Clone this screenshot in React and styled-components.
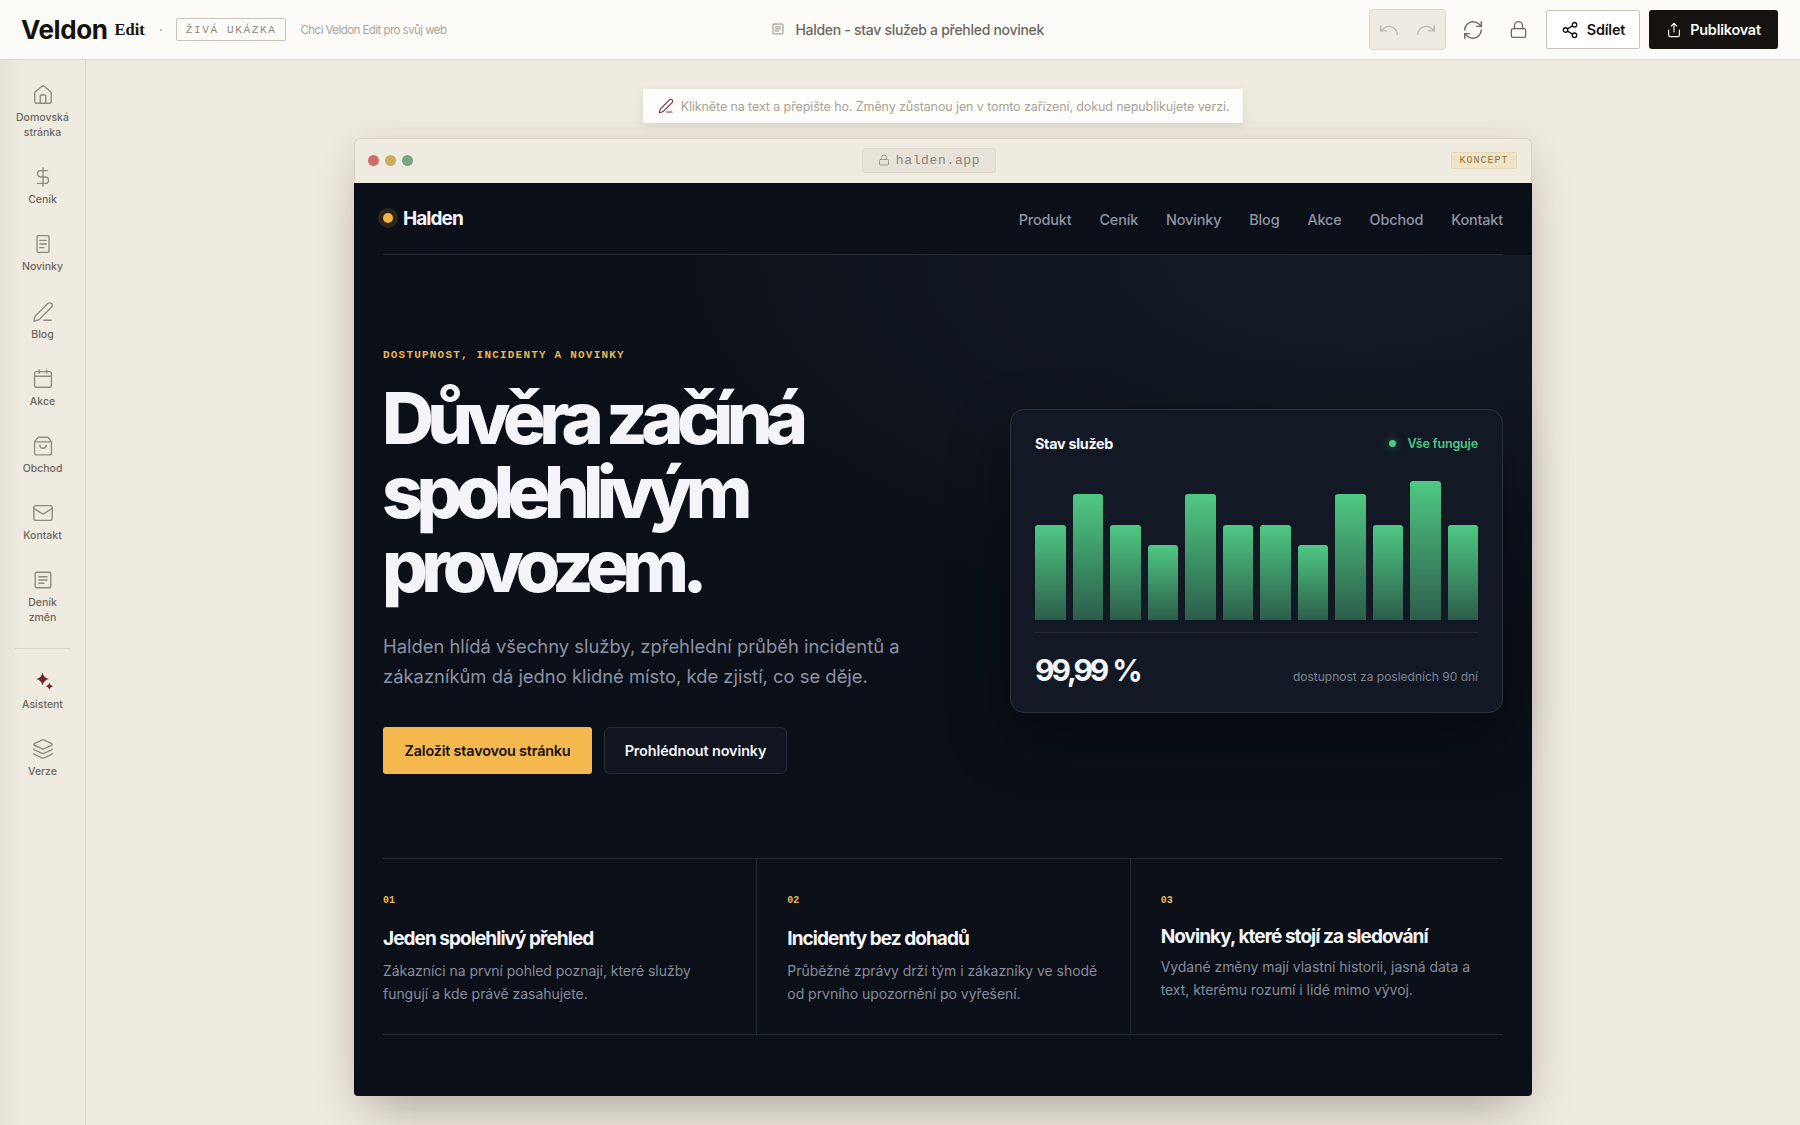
import React from "react";
import styled, { createGlobalStyle } from "styled-components";
import {
  House,
  DollarSign,
  PenLine,
  Mail,
  Layers,
  Undo,
  Redo,
  RefreshCw,
  Lock,
  Share2,
  Share,
} from "lucide-react";

const GlobalStyle = createGlobalStyle`
  * {
    box-sizing: border-box;
  }
  html, body {
    margin: 0;
    padding: 0;
    height: 100%;
  }
  body {
    font-family: Inter, "Liberation Sans", sans-serif;
    background: #f0ebe1;
    overflow: hidden;
  }
`;

const mono = `"Liberation Mono", monospace`;

const Page = styled.div`
  width: 1800px;
  height: 1125px;
  display: flex;
  flex-direction: column;
  overflow: hidden;
`;

const TopBar = styled.header`
  height: 60px;
  flex: none;
  display: flex;
  justify-content: space-between;
  align-items: center;
  padding: 0 22px 0 21px;
  background: #fcfbf7;
  border-bottom: 1px solid #d9d5cb;
`;

const Brand = styled.div`
  display: flex;
  align-items: center;
`;

const BrandName = styled.span`
  font-size: 26px;
  font-weight: 700;
  letter-spacing: -0.4px;
  color: #15120f;
`;

const BrandEdit = styled.span`
  font-family: "Liberation Serif", serif;
  font-size: 16.5px;
  font-weight: 700;
  color: #15120f;
  margin-left: 7px;
`;

const BrandDot = styled.span`
  width: 2px;
  height: 2px;
  border-radius: 50%;
  background: #a9a59b;
  margin: 0 14px 0 15px;
`;

const LiveTag = styled.span`
  font-family: ${mono};
  font-size: 11px;
  letter-spacing: 1.65px;
  color: #8d887d;
  height: 23px;
  padding: 0 8px 0 9px;
  display: flex;
  align-items: center;
  border: 1px solid #c9c4b8;
  border-radius: 2px;
`;

const TopLink = styled.span`
  font-size: 11.5px;
  letter-spacing: -0.55px;
  color: #a9a59b;
  margin-left: 15px;
`;

const DocTitle = styled.div`
  display: flex;
  align-items: center;
  gap: 10px;
  margin-top: -1px;
  font-size: 14px;
  font-weight: 500;
  letter-spacing: -0.29px;
  color: #6b675e;
  svg {
    color: #8f8b80;
  }
`;

const Actions = styled.div`
  display: flex;
  align-items: center;
  justify-content: flex-end;
`;

const HistoryGroup = styled.div`
  width: 77px;
  height: 41px;
  margin-right: 4px;
  display: flex;
  align-items: center;
  justify-content: space-between;
  padding: 0 8px;
  background: #efebe3;
  border: 1px solid #ddd8cd;
  border-radius: 4px;
  color: #bdb8ac;
`;

const ToolIcon = styled.span`
  width: 46px;
  display: flex;
  justify-content: center;
  color: #6b675e;
`;

const ShareButton = styled.button`
  height: 39px;
  width: 94px;
  margin-left: 4px;
  display: flex;
  align-items: center;
  justify-content: center;
  gap: 8px;
  font: 600 14.4px Inter, sans-serif;
  letter-spacing: -0.2px;
  color: #15120f;
  background: #fff;
  border: 1px solid #c9c4b8;
  border-radius: 2px;
`;

const PublishButton = styled(ShareButton)`
  width: 129px;
  margin-left: 9px;
  color: #fcfbf7;
  background: #15120f;
  border: 0;
  border-radius: 3px;
`;

const Body = styled.div`
  flex: 1;
  min-height: 0;
  display: flex;
`;

const SideBar = styled.nav`
  width: 86px;
  flex: none;
  padding: 11px 0;
  display: flex;
  flex-direction: column;
  align-items: center;
  background: linear-gradient(90deg, #e6e1d7 0, #efeae0 18px, #f0ebe1 30px);
  border-right: 1px solid #d6d1c6;
`;

const SideItem = styled.div`
  width: 100%;
  padding: 13.1px 0;
  display: flex;
  flex-direction: column;
  align-items: center;
  gap: 4px;
  color: #8f8b80;
  svg {
    display: block;
  }
`;

const SideLabel = styled.span`
  font-size: 10.5px;
  line-height: 15px;
  font-weight: 500;
  color: #6b675e;
  text-align: center;
`;

const SideRule = styled.div`
  width: 56px;
  height: 1px;
  flex: none;
  margin: 9px 0;
  background: #d9d4c9;
`;

const Canvas = styled.main`
  flex: 1;
  min-width: 0;
  padding-top: 29px;
  display: flex;
  flex-direction: column;
  align-items: center;
  overflow: hidden;
`;

const Notice = styled.div`
  height: 34px;
  flex: none;
  display: flex;
  align-items: center;
  gap: 7px;
  padding: 0 14px 0 15px;
  font-size: 12.5px;
  letter-spacing: -0.1px;
  color: #a8a398;
  background: #fffefb;
  border-radius: 2px;
  box-shadow: 0 2px 8px rgba(60, 50, 30, 0.12);
  svg {
    color: #7a2a3a;
  }
`;

const Frame = styled.section`
  width: 1178px;
  flex: none;
  margin-top: 15px;
  border-radius: 6px 6px 4px 4px;
  box-shadow: 0 26px 50px -14px rgba(40, 32, 15, 0.3), 0 0 36px rgba(40, 32, 15, 0.07);
`;

const FrameBar = styled.div`
  height: 45px;
  display: flex;
  align-items: center;
  justify-content: space-between;
  padding: 0 14px 2px 13px;
  background: #f0ebe1;
  border: 1px solid #d8d2c5;
  border-bottom: 0;
  border-radius: 6px 6px 0 0;
`;

const Dots = styled.div`
  display: flex;
  gap: 6px;
`;

const Dot = styled.span`
  width: 11px;
  height: 11px;
  border-radius: 50%;
  background: ${(p) => p.$color};
`;

const UrlPill = styled.div`
  width: 134px;
  height: 25px;
  margin-right: 6px;
  display: flex;
  align-items: center;
  justify-content: center;
  gap: 6px;
  font-family: ${mono};
  font-size: 13px;
  letter-spacing: 0.65px;
  color: #8a857a;
  background: #e8e3d8;
  border: 1px solid #dfd9cc;
  border-radius: 3px;
`;

const DraftBadge = styled.span`
  width: 66px;
  height: 17px;
  display: flex;
  align-items: center;
  justify-content: center;
  font-family: ${mono};
  font-size: 10px;
  letter-spacing: 1px;
  color: #8f7434;
  background: #efe3c8;
  border: 1px solid #e5d8b8;
  border-radius: 2px;
`;

const Site = styled.div`
  background: #0b0f17;
  border-radius: 0 0 4px 4px;
  padding-bottom: 61px;
`;

const Wrap = styled.div`
  width: 1120px;
  margin: 0 auto;
`;

const SiteNav = styled(Wrap)`
  height: 72px;
  display: flex;
  align-items: center;
  justify-content: space-between;
  padding-bottom: 1px;
  border-bottom: 1px solid #222a36;
`;

const Logo = styled.div`
  display: flex;
  align-items: center;
  gap: 5px;
  margin-left: -5px;
  font-size: 19px;
  font-weight: 700;
  letter-spacing: -0.95px;
  color: #f3f5fa;
`;

const LogoMark = styled.span`
  width: 10px;
  height: 10px;
  margin: 5px;
  border-radius: 50%;
  background: #f6b545;
  box-shadow: 0 0 0 5px rgba(246, 181, 69, 0.14);
`;

const NavLinks = styled.div`
  display: flex;
  gap: 28px;
  margin-top: 2px;
`;

const NavLink = styled.a`
  font-size: 14.4px;
  font-weight: 500;
  letter-spacing: -0.14px;
  color: #8f96a5;
`;

const HeroBand = styled.div`
  background: radial-gradient(780px 380px at 85% 0, #141b27 0, rgba(20, 27, 39, 0.55) 50%, rgba(11, 15, 23, 0) 100%);
`;

const Hero = styled(Wrap)`
  height: 603px;
  padding: 93px 0 84px;
  display: grid;
  grid-template-columns: 1fr 493px;
  align-items: center;
`;

const HeroCopy = styled.div`
  display: flex;
  flex-direction: column;
  align-items: flex-start;
`;

const Eyebrow = styled.div`
  font-family: ${mono};
  font-size: 11px;
  line-height: 13px;
  font-weight: 700;
  letter-spacing: 1.2px;
  color: #e9b656;
`;

const Headline = styled.h1`
  margin: 19px 0 0 -1px;
  font-size: 72px;
  line-height: 74px;
  font-weight: 800;
  letter-spacing: -6.7px;
  color: #f3f5fb;
`;

const Lead = styled.p`
  margin: 28px 0 0;
  font-size: 18.4px;
  line-height: 30px;
  color: #8b93a3;
`;

const ButtonRow = styled.div`
  display: flex;
  gap: 12px;
  margin-top: 36px;
`;

const PrimaryCta = styled.a`
  width: 209px;
  height: 47px;
  display: flex;
  align-items: center;
  justify-content: center;
  font-size: 14.4px;
  font-weight: 600;
  letter-spacing: -0.18px;
  color: #15120f;
  background: #f4b84e;
  border-radius: 3px;
`;

const GhostCta = styled.a`
  width: 183px;
  height: 47px;
  display: flex;
  align-items: center;
  justify-content: center;
  font-size: 14.4px;
  font-weight: 600;
  letter-spacing: -0.1px;
  color: #f3f5fb;
  background: #10151f;
  border: 1px solid #252c39;
  border-radius: 6px;
`;

const StatusCard = styled.div`
  height: 304px;
  padding: 23px 24px 0;
  background: #121924;
  border: 1px solid #2a313d;
  border-radius: 14px;
  box-shadow: 0 24px 60px rgba(0, 0, 0, 0.35);
`;

const CardHead = styled.div`
  display: flex;
  align-items: center;
  justify-content: space-between;
  height: 20px;
`;

const CardTitle = styled.span`
  font-size: 14.4px;
  font-weight: 700;
  letter-spacing: -0.3px;
  color: #f3f5fb;
`;

const CardState = styled.span`
  display: flex;
  align-items: center;
  gap: 11px;
  font-size: 12.5px;
  font-weight: 600;
  letter-spacing: -0.15px;
  color: #4fc983;
  &::before {
    content: "";
    width: 7px;
    height: 7px;
    border-radius: 50%;
    background: #4fc983;
    box-shadow: 0 0 8px rgba(79, 201, 131, 0.6);
  }
`;

const Bars = styled.div`
  height: 139px;
  margin-top: 28px;
  display: grid;
  grid-template-columns: repeat(12, 1fr);
  gap: 7px;
  align-items: end;
`;

const Bar = styled.div`
  height: ${(p) => p.$h}px;
  border-radius: 3px 3px 0 0;
  background: linear-gradient(180deg, #4fc983 0, #2c5e4a 100%);
`;

const CardFoot = styled.div`
  margin-top: 12px;
  padding-top: 18px;
  display: flex;
  align-items: flex-end;
  justify-content: space-between;
  border-top: 1px solid #252c38;
`;

const BigNumber = styled.span`
  font-size: 30px;
  line-height: 38px;
  font-weight: 700;
  letter-spacing: -3.1px;
  word-spacing: 2px;
  color: #f3f5fb;
`;

const FootNote = styled.span`
  font-size: 12px;
  line-height: 25px;
  color: #7b8494;
`;

const Features = styled(Wrap)`
  display: grid;
  grid-template-columns: repeat(3, 1fr);
  border-top: 1px solid #222a36;
  border-bottom: 1px solid #222a36;
`;

const Feature = styled.article`
  height: 175px;
  padding: 36px 20px 0 ${(p) => (p.$first ? "0" : "30px")};
  border-left: ${(p) => (p.$first ? "0" : "1px solid #222a36")};
`;

const FeatureNumber = styled.div`
  font-family: ${mono};
  font-size: 10px;
  line-height: 12px;
  font-weight: 700;
  color: #e9b656;
`;

const FeatureTitle = styled.h3`
  margin: ${(p) => (p.$raised ? "18px" : "20px")} 0 0;
  font-size: 19px;
  line-height: 23px;
  font-weight: 700;
  letter-spacing: -0.95px;
  color: #f3f5fb;
`;

const FeatureText = styled.p`
  margin: ${(p) => (p.$raised ? "7px" : "8.5px")} 0 0;
  font-size: 14px;
  line-height: 23px;
  letter-spacing: -0.04px;
  color: #858d9c;
`;

const NewsIcon = (props) => (
  <svg width="22" height="22" viewBox="0 0 24 24" fill="none" stroke="currentColor" strokeWidth="1.5" strokeLinecap="round" {...props}>
    <rect x="5.5" y="2.8" width="13" height="18.4" rx="1.2" />
    <path d="M8.5 8h7M8.5 12h7M8.5 16h4.5" />
  </svg>
);

const CalendarIcon = (props) => (
  <svg width="22" height="22" viewBox="0 0 24 24" fill="none" stroke="currentColor" strokeWidth="1.5" strokeLinecap="round" {...props}>
    <rect x="2.8" y="4" width="18.4" height="17" rx="2" />
    <path d="M3 9h18M8 2.2v3.4M16 2.2v3.4" />
  </svg>
);

const BagIcon = (props) => (
  <svg width="22" height="22" viewBox="0 0 24 24" fill="none" stroke="currentColor" strokeWidth="1.5" strokeLinecap="round" strokeLinejoin="round" {...props}>
    <path d="M6.5 2.5h11l3.7 5V20a1.7 1.7 0 0 1-1.7 1.7h-15A1.7 1.7 0 0 1 2.8 20V7.5z" />
    <path d="M3 7.5h18M8.5 11a3.5 3.5 0 0 0 7 0" />
  </svg>
);

const LogIcon = ({ size = 22, ...props }) => (
  <svg width={size} height={size} viewBox="0 0 24 24" fill="none" stroke="currentColor" strokeWidth={size < 20 ? 1.7 : 1.5} strokeLinecap="round" {...props}>
    <rect x="3.5" y="3.5" width="17" height="17" rx="1.5" />
    <path d="M7.5 8.5h9M7.5 12h9M7.5 15.5h5.5" />
  </svg>
);

const SparkIcon = (props) => (
  <svg width="22" height="22" viewBox="0 0 24 24" fill="#6e2433" {...props}>
    <path d="M11.5 1.8Q12.8 7.5 18.5 8.8 12.8 10.1 11.5 15.8 10.2 10.1 4.5 8.8 10.2 7.5 11.5 1.8z" />
    <path d="M19 12.7Q19.7 15.8 22.8 16.5 19.7 17.2 19 20.3 18.3 17.2 15.2 16.5 18.3 15.8 19 12.7z" />
  </svg>
);

const sideItems = [
  { icon: <House size={22} strokeWidth={1.5} />, label: ["Domovská", "stránka"] },
  { icon: <DollarSign size={22} strokeWidth={1.5} />, label: ["Ceník"] },
  { icon: <NewsIcon />, label: ["Novinky"] },
  { icon: <PenLine size={22} strokeWidth={1.5} />, label: ["Blog"] },
  { icon: <CalendarIcon />, label: ["Akce"] },
  { icon: <BagIcon />, label: ["Obchod"] },
  { icon: <Mail size={22} strokeWidth={1.5} />, label: ["Kontakt"] },
  { icon: <LogIcon />, label: ["Deník", "změn"] },
];

const sideTools = [
  { icon: <SparkIcon />, label: ["Asistent"] },
  { icon: <Layers size={22} strokeWidth={1.5} />, label: ["Verze"] },
];

const renderSideItem = (item) => (
  <SideItem key={item.label[0]}>
    {item.icon}
    <SideLabel>
      {item.label.map((line) => (
        <div key={line}>{line}</div>
      ))}
    </SideLabel>
  </SideItem>
);

const navLinks = ["Produkt", "Ceník", "Novinky", "Blog", "Akce", "Obchod", "Kontakt"];
const barHeights = [95, 126, 95, 75, 126, 95, 95, 75, 126, 95, 139, 95];

const features = [
  {
    number: "01",
    title: "Jeden spolehlivý přehled",
    text: ["Zákazníci na první pohled poznají, které služby", "fungují a kde právě zasahujete."],
  },
  {
    number: "02",
    title: "Incidenty bez dohadů",
    text: ["Průběžné zprávy drží tým i zákazníky ve shodě", "od prvního upozornění po vyřešení."],
  },
  {
    number: "03",
    title: "Novinky, které stojí za sledování",
    text: ["Vydané změny mají vlastní historii, jasná data a", "text, kterému rozumí i lidé mimo vývoj."],
    raised: true,
  },
];

const App = () => (
  <Page>
    <GlobalStyle />
    <TopBar>
      <Brand>
        <BrandName>Veldon</BrandName>
        <BrandEdit>Edit</BrandEdit>
        <BrandDot />
        <LiveTag>ŽIVÁ UKÁZKA</LiveTag>
        <TopLink>Chci Veldon Edit pro svůj web</TopLink>
      </Brand>
      <DocTitle>
        <LogIcon size={14} />
        Halden - stav služeb a přehled novinek
      </DocTitle>
      <Actions>
        <HistoryGroup>
          <Undo size={22} strokeWidth={1.5} />
          <Redo size={22} strokeWidth={1.5} />
        </HistoryGroup>
        <ToolIcon>
          <RefreshCw size={22} strokeWidth={1.5} />
        </ToolIcon>
        <ToolIcon>
          <Lock size={19} strokeWidth={1.6} />
        </ToolIcon>
        <ShareButton>
          <Share2 size={18} strokeWidth={1.7} />
          Sdílet
        </ShareButton>
        <PublishButton>
          <Share size={16} strokeWidth={1.7} />
          Publikovat
        </PublishButton>
      </Actions>
    </TopBar>
    <Body>
      <SideBar>
        {sideItems.map(renderSideItem)}
        <SideRule />
        {sideTools.map(renderSideItem)}
      </SideBar>
      <Canvas>
        <Notice>
          <PenLine size={16} strokeWidth={1.6} />
          Klikněte na text a přepište ho. Změny zůstanou jen v tomto zařízení, dokud nepublikujete verzi.
        </Notice>
        <Frame>
          <FrameBar>
            <Dots>
              <Dot $color="#cb6f68" />
              <Dot $color="#cfaa5c" />
              <Dot $color="#7ba583" />
            </Dots>
            <UrlPill>
              <Lock size={12} strokeWidth={1.6} />
              halden.app
            </UrlPill>
            <DraftBadge>KONCEPT</DraftBadge>
          </FrameBar>
          <Site>
            <SiteNav>
              <Logo>
                <LogoMark />
                Halden
              </Logo>
              <NavLinks>
                {navLinks.map((link) => (
                  <NavLink key={link}>{link}</NavLink>
                ))}
              </NavLinks>
            </SiteNav>
            <HeroBand>
              <Hero>
                <HeroCopy>
                  <Eyebrow>DOSTUPNOST, INCIDENTY A NOVINKY</Eyebrow>
                  <Headline>
                    Důvěra začíná
                    <br />
                    spolehlivým
                    <br />
                    provozem.
                  </Headline>
                  <Lead>
                    Halden hlídá všechny služby, zpřehlední průběh incidentů a
                    <br />
                    zákazníkům dá jedno klidné místo, kde zjistí, co se děje.
                  </Lead>
                  <ButtonRow>
                    <PrimaryCta>Založit stavovou stránku</PrimaryCta>
                    <GhostCta>Prohlédnout novinky</GhostCta>
                  </ButtonRow>
                </HeroCopy>
                <StatusCard>
                  <CardHead>
                    <CardTitle>Stav služeb</CardTitle>
                    <CardState>Vše funguje</CardState>
                  </CardHead>
                  <Bars>
                    {barHeights.map((h, i) => (
                      <Bar key={i} $h={h} />
                    ))}
                  </Bars>
                  <CardFoot>
                    <BigNumber>99,99 %</BigNumber>
                    <FootNote>dostupnost za posledních 90 dní</FootNote>
                  </CardFoot>
                </StatusCard>
              </Hero>
            </HeroBand>
            <Features>
              {features.map((f, i) => (
                <Feature key={f.number} $first={i === 0}>
                  <FeatureNumber>{f.number}</FeatureNumber>
                  <FeatureTitle $raised={f.raised}>{f.title}</FeatureTitle>
                  <FeatureText $raised={f.raised}>
                    {f.text[0]}
                    <br />
                    {f.text[1]}
                  </FeatureText>
                </Feature>
              ))}
            </Features>
          </Site>
        </Frame>
      </Canvas>
    </Body>
  </Page>
);

export default App;
